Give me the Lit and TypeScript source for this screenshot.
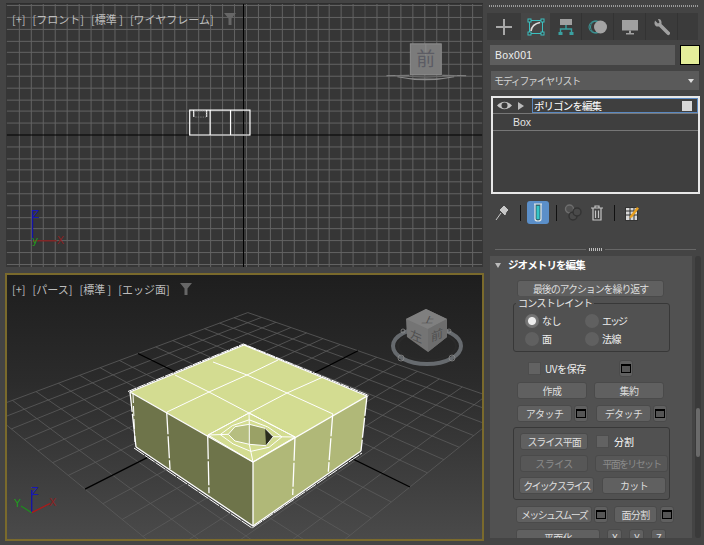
import { LitElement, html, css, svg } from "lit";
import { customElement } from "lit/decorators.js";

type P = [number, number];
const proj = (u: number, v: number): P => {
  const w = 1 - 0.1985 * u - 0.1868 * v;
  return [(81.6 * u - 177.9 * v + 247) / w, (-16.7 * u - 9.3 * v + 407) / w];
};
const pts = (a: P[]) => a.map((p) => p.join(",")).join(" ");
const mix = (a: P, b: P, t: number): P => [a[0] + (b[0] - a[0]) * t, a[1] + (b[1] - a[1]) * t];
const ln = (a: P, b: P) => svg`<line x1=${a[0]} y1=${a[1]} x2=${b[0]} y2=${b[1]}></line>`;

function frontGrid() {
  const out: unknown[] = [];
  for (let k = 0; k < 40; k++) {
    const x = Math.round(18 + k * 11.98) + 0.5;
    if (x > 484) break;
    const major = k === 9 || k === 29;
    out.push(svg`<line x1=${x} y1="4" x2=${x} y2="268" stroke=${major ? "#505050" : "#636363"} stroke-width="1"></line>`);
  }
  for (let k = -12; k < 12; k++) {
    const y = Math.round(135 + k * 11.8) + 0.5;
    if (k !== 0) out.push(svg`<line x1="6" y1=${y} x2="483" y2=${y} stroke="#636363" stroke-width="1"></line>`);
  }
  return out;
}

function perspGrid() {
  const out: unknown[] = [];
  for (let i = -7; i <= 7; i++) {
    const t = i / 7;
    if (i === 0) continue;
    out.push(ln(proj(t, -1), proj(t, 1)));
    out.push(ln(proj(-1, t), proj(1, t)));
  }
  return out;
}

function box() {
  const far: P = [244, 345], left: P = [130, 392], right: P = [367, 396], near: P = [253, 462];
  const bl: P = [136, 447], br: P = [361, 451], bn: P = [253, 526];
  const A: P = [249, 413], B: P = [295, 437], C: P = [253, 462], D: P = [208, 435];
  const hole: P[] = [[228.3, 434.3], [235, 426.7], [249.3, 424.3], [265, 428.3], [273.3, 436.7], [266, 445.7], [249.3, 444.3], [235, 441]];
  const outer: P[] = [D, mix(D, A, 0.5), A, mix(A, B, 0.5), B, mix(B, C, 0.5), C, mix(C, D, 0.5)];
  const ring1 = hole.map((p, i) => mix(p, outer[i], 0.4));
  return svg`
    <polygon points=${pts([far, right, near, left])} fill="#d3dc91"></polygon>
    <polygon points=${pts([left, near, bn, bl])} fill="#6e744a"></polygon>
    <polygon points=${pts([near, right, br, bn])} fill="#b0b878"></polygon>
    <polygon points=${pts(hole)} fill="#b6be80"></polygon>
    <polygon points=${pts([[249.3, 424.3], [265, 428.3], [266, 445.7], [249.3, 444.3]])} fill="#9aa166"></polygon>
    <polygon points=${pts([[265, 428.3], [273.3, 436.7], [266, 445.7]])} fill="#2b2d1d"></polygon>
    <g stroke="#fff" stroke-width="1" fill="none">
      <polyline points="175,375 209,392 249,413 295,437"></polyline>
      <polyline points="213,362 247,375 287,393 333,414"></polyline>
      <polyline points="278,360 247,375 209,392 167,412"></polyline>
      <polyline points="323,377 287,393 249,413 208,435"></polyline>
      <polygon points=${pts(hole)}></polygon>
      <polygon points=${pts(ring1)}></polygon>
      <polygon points=${pts(outer)}></polygon>
      ${hole.map((p, i) => (i % 2 === 0 ? ln(p, outer[i]) : null))}
      <line x1="249.3" y1="424.3" x2="249.3" y2="444.3"></line>
      <g stroke-width="1.3">
        <polyline points="130,392 244,345 367,396 253,462 130,392"></polyline>
        <polyline points="128,391.5 243.5,344 369,395.5" stroke-dasharray="9 1" stroke-width="1"></polyline>
        <line x1="253" y1="462" x2="253" y2="526"></line>
        <line x1="130" y1="392" x2="136" y2="447" stroke-dasharray="20 2"></line>
        <line x1="133" y1="393" x2="135" y2="445" stroke-dasharray="10 3" stroke-width="1"></line>
        <line x1="367" y1="396" x2="361" y2="451" stroke-dasharray="20 2"></line>
        <polyline points="136,447 253,526 361,451"></polyline>
        <polyline points="134,448 252,528 362,453" stroke-dasharray="12 1" stroke-width="1"></polyline>
        <line x1="166.7" y1="412.3" x2="170" y2="469" stroke-dasharray="22 2"></line>
        <line x1="207.7" y1="435.3" x2="209" y2="493.3" stroke-dasharray="24 2"></line>
        <line x1="295" y1="436.7" x2="292.7" y2="495" stroke-dasharray="24 2"></line>
        <line x1="332.7" y1="414.3" x2="328.3" y2="471.7" stroke-dasharray="22 2"></line>
      </g>
    </g>`;
}

const filterIcon = html`<svg class="filter" viewBox="0 0 12 12"><path d="M0 0H12L7.5 5.5V12H4.5V5.5Z" fill="#666"></path></svg>`;
const winIcon = html`<span class="ib"><i></i></span>`;

@customElement("app-root")
export class AppRoot extends LitElement {
  static styles = css`
    :host { display: block; width: 704px; height: 545px; overflow: hidden; background: #444; font-family: "Noto Sans CJK JP", "Liberation Sans", sans-serif; font-size: 10px; color: #ddd; }
    .root { display: flex; width: 704px; height: 545px; }
    .left { width: 484px; display: flex; flex-direction: column; padding: 3px 0 0 5px; box-sizing: border-box; background: #444; }
    .vp { position: relative; overflow: hidden; box-sizing: border-box; }
    .vp svg.scene { display: block; width: 100%; height: 100%; }
    .top { margin-left: 1px; width: 477px; height: 264px; background: #363636; border-top: 1px solid #2e2e2e; }
    .bottom { margin-top: 6px; width: 479px; height: 268px; border: 2px solid #7a6a2c; background: linear-gradient(#1e1e1e, #2b2b2b 40%, #4a4a4a); }
    .labels { position: absolute; left: 6px; top: 8px; display: flex; align-items: center; gap: 7px; color: #bdbdbd; font-size: 11px; line-height: 14px; white-space: nowrap; }
    .bottom .labels { left: 5px; top: 7px; }
    .filter { width: 12px; height: 12px; margin-left: 3px; }
    .right { width: 220px; background: #444; position: relative; display: flex; flex-direction: column; }
    .dotted { margin: 5px 5px 0 5px; height: 2px; background: repeating-linear-gradient(90deg, #9a9a9a 0 1px, #444 1px 2px); }
    .tabs { margin: 6px 6px 0 3px; height: 27px; display: flex; background: #3b3b3b; }
    .tab { width: 32px; display: flex; align-items: center; justify-content: center; box-sizing: border-box; border-right: 1px solid #333; }
    .tab.first { width: 34px; border: 0; }
    .tab.on { width: 29px; background: #464646; border: 0; }
    .tab svg { width: 20px; height: 20px; }
    .name { margin: 5px 4px 0 6px; height: 20px; display: flex; gap: 5px; }
    .field { flex: 1; background: #5e5e5e; color: #eee; padding-left: 5px; line-height: 20px; font-family: "Liberation Sans", sans-serif; font-size: 10.5px; letter-spacing: .3px; }
    .swatch { width: 20px; height: 20px; box-sizing: border-box; border: 1px solid #000; background: #e4ee9a; }
    .drop { margin: 6px 5px 0 7px; height: 19px; background: #5a5a5a; display: flex; justify-content: space-between; align-items: center; padding: 0 5px 0 3px; color: #d2d2d2; letter-spacing: -1.3px; font-size: 10px; }
    .drop b { width: 0; height: 0; border: 3.5px solid transparent; border-top: 4px solid #ddd; border-bottom: 0; }
    .stack { margin: 6px 4px 0 7px; height: 98px; box-sizing: border-box; border: 2px solid #e8e8e8; background: #3f3f3f; }
    .s1 { height: 15px; display: flex; align-items: center; border-bottom: 1px solid #777; }
    .s1 .eye { width: 15px; height: 11px; margin: 0 6px 0 4px; }
    .s1 .tri { width: 0; height: 0; border: 4px solid transparent; border-left: 6px solid #bbb; border-right: 0; margin-right: 8px; }
    .sel { flex: 1; height: 15px; box-sizing: border-box; border: 1px solid #5a88c0; display: flex; justify-content: space-between; align-items: center; padding: 0 5px 0 1px; color: #fff; font-size: 10.5px; letter-spacing: -.9px; line-height: 13px; }
    .sel i { width: 10px; height: 10px; background: #d8d8d8; }
    .s2 { height: 16px; border-bottom: 1px solid #777; padding-left: 20px; line-height: 17px; font-family: "Liberation Sans", sans-serif; font-size: 10.5px; color: #e2e2e2; }
    .tools { margin: 6px 0 0 11px; height: 25px; display: flex; align-items: center; }
    .tools svg { display: block; }
    .sep { width: 1px; height: 16px; background: #111; }
    .sa { margin: 0 6px 0 11px; } .sb { margin: 0 7px 0 7px; } .sc { margin: 0 10px 0 11px; }
    .trash { margin-left: 9px; }
    .active { width: 22px; height: 23px; background: #5b8fc9; border-radius: 3px; display: flex; align-items: center; justify-content: center; }
    .divider { margin: 24px 8px 0 11px; height: 1px; display: flex; align-items: center; gap: 3px; }
    .divider i { flex: 1; height: 1px; background: #666; }
    .divider u { width: 13px; height: 3px; background: repeating-linear-gradient(90deg, #bbb 0 1px, #444 1px 2px); }
    .rollwrap { margin: 6px 0 0 6px; height: 282px; display: flex; gap: 3px; }
    .roll { width: 202px; height: 282px; background: #515151; overflow: hidden; box-sizing: border-box; padding: 0 0 0 23px; }
    .bar { width: 6px; height: 282px; background: #3a3a3a; position: relative; border-radius: 3px; }
    .bar i { position: absolute; left: 1px; right: 1px; top: 152px; height: 49px; background: #6a6a6a; border-radius: 2px; }
    .title { margin-left: -23px; height: 18px; padding: 0 6px 0 5px; display: flex; align-items: center; color: #fff; font-weight: 700; font-size: 10.5px; letter-spacing: -.9px; line-height: 16px; }
    .title b { width: 0; height: 0; border: 3.5px solid transparent; border-top: 5px solid #bbb; border-bottom: 0; margin-right: 7px; }
    .title span { flex: 1; }
    .title u { width: 6px; height: 6px; background: radial-gradient(circle, #888 40%, transparent 50%) 0 0 / 2px 2px; }
    .row { display: flex; height: 17px; margin-left: 4px; gap: 7px; }
    .btn { box-sizing: border-box; height: 17px; background: #606060; border: 1px solid #4a4a4a; border-radius: 3px; color: #dedede; display: flex; align-items: center; justify-content: center; font-size: 10px; letter-spacing: -.6px; white-space: nowrap; overflow: hidden; line-height: 14px; }
    .btn.dis { color: #8a8a8a; background: #575757; }
    .t1 { letter-spacing: -1.1px; } .t2 { letter-spacing: -1.7px; }
    .w70 { width: 70px; } .w55 { width: 55px; } .w147 { width: 147px; } .w68 { width: 68px; } .w73 { width: 73px; }
    .w76 { width: 76px; } .w75 { width: 75px; } .w64 { width: 64px; } .w43 { width: 43px; } .w84 { width: 84px; } .w15 { width: 15px; }
    .ib { box-sizing: border-box; width: 14px; height: 17px; background: #606060; border: 1px solid #4a4a4a; border-radius: 3px; display: flex; align-items: center; justify-content: center; flex: none; }
    .ib i { box-sizing: border-box; width: 10px; height: 9px; border: 1px solid #000; border-top-width: 2px; background: #555; }
    .g2 { gap: 2px; } .g9 { gap: 8px; }
    .m6 { margin-top: 6px; } .m5 { margin-top: 5px; } .m8 { margin-top: 8px; }
    .group { position: relative; margin: 6px 0 0 0; width: 157px; box-sizing: border-box; border: 1px solid #383838; border-radius: 3px; }
    .legend { position: absolute; left: 2px; top: -8px; background: #515151; padding: 0 2px; line-height: 13px; letter-spacing: -.7px; color: #e8e8e8; font-size: 10px; }
    .g1 { box-sizing: border-box; height: 47px; padding: 10px 0 0 11px; display: grid; grid-template-columns: 60px 60px; grid-auto-rows: 18px; }
    .radio { display: flex; align-items: flex-start; gap: 3px; line-height: 14px; color: #eee; letter-spacing: -.5px; white-space: nowrap; }
    .radio i { width: 14px; height: 14px; border-radius: 50%; background: #606060; flex: none; }
    .radio.on i { background: radial-gradient(circle, #eee 0 3.5px, #777 4.5px, #707070 7px); }
    .radio .t2 { letter-spacing: -2px; }
    .uv { margin-left: 15px; align-items: center; gap: 0; }
    .chk { width: 13px; height: 13px; background: #626262; border: 1px solid #4d4d4d; box-sizing: border-box; flex: none; }
    .uv label { width: 74px; margin-left: 4px; letter-spacing: -.4px; color: #eee; }
    .g3 { margin-top: 5px; height: 73px; padding: 5px 0 0 5px; display: flex; flex-direction: column; gap: 5px; }
    .g3 .row { margin-left: 0; align-items: center; }
    .ml1 { margin-left: 1px !important; }
    .g3 label { margin-left: -3px; color: #fff; line-height: 17px; }
    .m7 { margin-left: 6px; }
    .face { margin: 0 1px 0 4px; }
    .last { margin-left: 3px; }
    .axis { font-family: "DejaVu Sans", sans-serif; font-size: 11px; }
  `;

  render() {
    return html`<div class="root">
      <div class="left">
        <div class="vp top">
          <svg class="scene" viewBox="6 4 477 264">
            ${frontGrid()}
            <line x1="6" y1="135.5" x2="483" y2="135.5" stroke="#000"></line>
            <line x1="243.5" y1="4" x2="243.5" y2="268" stroke="#000"></line>
            <g fill="none" stroke="#fff" stroke-width="1.2">
              <rect x="189.5" y="110.5" width="60.5" height="25"></rect>
              <line x1="210" y1="110.5" x2="210" y2="135.5"></line>
              <line x1="230.5" y1="110.5" x2="230.5" y2="135.5"></line>
              <polyline points="193.5,110.5 193.5,117.5"></polyline>
              <polyline points="206.5,110.5 206.5,117.5"></polyline>
            </g>
            <rect x="194" y="111.5" width="12" height="6" fill="none" stroke="#888" stroke-width=".8" stroke-dasharray="1.5 1"></rect>
            <rect x="411" y="44" width="31" height="31" fill="#7b7b7b"></rect>
            <rect x="411" y="44" width="31" height="31" fill="none" stroke="#8e8e8e"></rect>
            <line x1="426.5" y1="44" x2="426.5" y2="60" stroke="#8a8a8a"></line>
            <text x="426.5" y="66" text-anchor="middle" font-size="19" fill="#5c5c64" font-family="Noto Sans CJK JP">前</text>
            <path d="M387 76 L410 75.5 M443 75.5 L467 76 M398 77 Q426 83 455 77 M414 79.5 H440" stroke="#8a8a8a" stroke-width="1.2" fill="none"></path>
            <path d="M396 76 Q426 79 458 76" stroke="#6a6a6a" fill="none"></path>
            <line x1="31.7" y1="211" x2="31.7" y2="241.7" stroke="#1212a8" stroke-width="1.3"></line>
            <line x1="31.7" y1="241.7" x2="56" y2="241.7" stroke="#8a1e1e" stroke-width="1.3"></line>
            <text class="axis" x="31" y="219" fill="#1818b8">Z</text>
            <text class="axis" x="56" y="245" fill="#8a2222">X</text>
            <text class="axis" x="31" y="245" fill="#1f9a1f">y</text>
          </svg>
          <div class="labels"><span>[+]</span><span>[フロント]</span><span>[標準 ]</span><span>[ワイヤフレーム]</span>${filterIcon}</div>
        </div>
        <div class="vp bottom">
          <svg class="scene" viewBox="7 275 475 264">
            <g stroke="#5c5c5c" stroke-width=".8">${perspGrid()}</g>
            <g stroke="#000" stroke-width="1.3">${ln(proj(1, 0), proj(-1, 0))}${ln(proj(0, 1), proj(0, -1))}</g>
            ${box()}
            <ellipse cx="427" cy="346" rx="34" ry="18" fill="none" stroke="#666a6e" stroke-width="4"></ellipse>
            <ellipse cx="427" cy="346" rx="29" ry="14" fill="none" stroke="#2a2a2a" stroke-width="2"></ellipse>
            <g fill="none" stroke="#8a8a8a" stroke-width=".8"><circle cx="401" cy="358" r="3"></circle><circle cx="452" cy="358" r="3"></circle><circle cx="403" cy="331" r="2"></circle><circle cx="449" cy="331" r="2"></circle></g>
            <polygon points="426,309 447,319 447,337 428,352 407,337 406,319" fill="#747474"></polygon>
            <polygon points="426,309 447,319 428,329 406,319" fill="#7f7f7f"></polygon>
            <polygon points="428,329 447,319 447,337 428,352" fill="#6d6d6d"></polygon>
            <text font-size="12" fill="#4c4c4c" font-family="Noto Sans CJK JP" transform="translate(421,323) skewX(-25) scale(1,.7)">上</text>
            <text font-size="12" fill="#505050" font-family="Noto Sans CJK JP" transform="translate(410,338) skewY(24)">左</text>
            <text font-size="12" fill="#505050" font-family="Noto Sans CJK JP" transform="translate(431,342) skewY(-24)">前</text>
            <line x1="31.7" y1="490" x2="31.7" y2="512.7" stroke="#1212a8" stroke-width="1.3"></line>
            <line x1="31.7" y1="512.7" x2="50" y2="503.5" stroke="#b01818" stroke-width="1.3"></line>
            <line x1="31.7" y1="512.7" x2="21" y2="506" stroke="#1f8a1f" stroke-width="1.3"></line>
            <text class="axis" x="31" y="495" fill="#1818b8">Z</text>
            <text class="axis" x="49" y="506" fill="#8a2222">X</text>
            <text class="axis" x="14" y="507" fill="#1f9a1f">Y</text>
          </svg>
          <div class="labels"><span>[+]</span><span>[パース]</span><span>[標準 ]</span><span>[エッジ面]</span>${filterIcon}</div>
        </div>
      </div>
      <div class="right">
        <div class="dotted"></div>
        <div class="tabs">
          <div class="tab first"><svg viewBox="0 0 20 20"><path d="M10 2V18M2 10H18" stroke="#a8a8a8" stroke-width="2"></path></svg></div>
          <div class="tab on"><svg viewBox="0 0 20 20"><rect x="3.5" y="3.5" width="13" height="13" fill="none" stroke="#3cc0c0"></rect><g fill="#3a3a3a" stroke="#3cc0c0"><rect x="2" y="2" width="3" height="3"></rect><rect x="15" y="2" width="3" height="3"></rect><rect x="2" y="15" width="3" height="3"></rect><rect x="15" y="15" width="3" height="3"></rect></g><path d="M5 14Q6 7 14 5.5" fill="none" stroke="#ddd" stroke-width="1.6"></path></svg></div>
          <div class="tab"><svg viewBox="0 0 20 20"><rect x="4" y="2" width="12" height="6" fill="#a0a0a0"></rect><path d="M10 8V12M4.5 16V12H15.5V16" fill="none" stroke="#3aa0a0" stroke-width="1.4"></path><rect x="2.5" y="15" width="4" height="3" fill="#3aa0a0"></rect><rect x="13.5" y="15" width="4" height="3" fill="#3aa0a0"></rect></svg></div>
          <div class="tab"><svg viewBox="0 0 20 20"><g fill="none" stroke="#3a9a9a" stroke-width="1"><circle cx="7" cy="10" r="6"></circle><circle cx="8.5" cy="10" r="6"></circle></g><circle cx="12.5" cy="10" r="6.5" fill="#a4a4a4"></circle></svg></div>
          <div class="tab"><svg viewBox="0 0 20 20"><rect x="2" y="3" width="16" height="10.5" fill="#a0a0a0"></rect><rect x="9" y="13.5" width="2" height="2.5" fill="#a0a0a0"></rect><rect x="6" y="16" width="8" height="1.5" fill="#a0a0a0"></rect></svg></div>
          <div class="tab"><svg viewBox="0 0 20 20"><path d="M3 3.5 L6 6.5 L7.5 5.5 L6 2 Q9 1.5 9.5 5 L9.5 7 L18 15.5 Q18.5 17 17 18 Q15.5 18.5 14.5 17 L7 9.5 L4.5 9.5 Q1.5 8 3 3.5Z" fill="#a0a0a0"></path></svg></div>
        </div>
        <div class="name"><div class="field">Box001</div><div class="swatch"></div></div>
        <div class="drop"><span>モディファイヤリスト</span><b></b></div>
        <div class="stack">
          <div class="s1">
            <svg class="eye" viewBox="0 0 15 11"><path d="M0 5.5Q7.5 -2 15 5.5Q7.5 13 0 5.5Z" fill="#c4c4c4"></path><circle cx="7.5" cy="5.5" r="3" fill="#3a3a3a"></circle></svg>
            <span class="tri"></span>
            <div class="sel"><span>ポリゴンを編集</span><i></i></div>
          </div>
          <div class="s2">Box</div>
        </div>
        <div class="tools">
          <svg width="14" height="16" viewBox="0 0 14 16"><path d="M1 15L6 8M5 5L10 10L11 7L13 5L9 1L7 3Z" fill="#c8c8c8" stroke="#c8c8c8"></path></svg>
          <span class="sep sa"></span>
          <div class="active"><svg width="10" height="19" viewBox="0 0 10 19"><path d="M1 1H9M2 1V16Q2 18 5 18Q8 18 8 16V1" fill="#2c6a78" stroke="#e8e8e8" stroke-width="1.2"></path><rect x="3.6" y="3" width="2.8" height="13" fill="#35c6c6"></rect></svg></div>
          <span class="sep sb"></span>
          <svg width="18" height="17" viewBox="0 0 18 17" fill="none" stroke="#333" stroke-width="1.4"><circle cx="5.5" cy="5" r="4" stroke="#6e6e6e" fill="#505050"></circle><circle cx="9" cy="12" r="4" fill="#4a4a4a"></circle><circle cx="13" cy="8" r="4" fill="#4a4a4a"></circle></svg>
          <svg class="trash" width="12" height="16" viewBox="0 0 12 16" fill="none" stroke="#c4c4c4" stroke-width="1.2"><path d="M0 3H12M4 3V1H8V3M2 3V15H10V3M4.5 5.5V13M7.5 5.5V13"></path></svg>
          <span class="sep sc"></span>
          <svg width="14" height="16" viewBox="0 0 14 16"><rect x=".5" y="2.5" width="12" height="13" fill="#d8d8d8" stroke="#333"></rect><path d="M1 6H12M1 10H12M5 3V15M9 3V15" stroke="#333"></path><path d="M5 11L12 2L14 3.5L7 12.5L4.5 13Z" fill="#e8a020"></path></svg>
        </div>
        <div class="divider"><i></i><u></u><i></i></div>
        <div class="rollwrap">
          <div class="roll">
            <div class="title"><b></b><span>ジオメトリを編集</span><u></u></div>
            <div class="row m6"><div class="btn w147 t1">最後のアクションを繰り返す</div></div>
            <div class="group">
              <div class="legend">コンストレイント</div>
              <div class="g1">
                <div class="radio on"><i></i>なし</div><div class="radio"><i></i><span class="t2">エッジ</span></div>
                <div class="radio"><i></i>面</div><div class="radio"><i></i>法線</div>
              </div>
            </div>
            <div class="row uv m8"><span class="chk"></span><label>UVを保存</label>${winIcon}</div>
            <div class="row m5"><div class="btn w70">作成</div><div class="btn w70">集約</div></div>
            <div class="row m6 g2"><div class="btn w55">アタッチ</div>${winIcon}<div class="btn w55 m7">デタッチ</div>${winIcon}</div>
            <div class="group g3">
              <div class="row ml1 g9"><div class="btn w68 t1">スライス平面</div><span class="chk"></span><label>分割</label></div>
              <div class="row ml1"><div class="btn w68 dis">スライス</div><div class="btn w73 dis t2">平面をリセット</div></div>
              <div class="row g9"><div class="btn w75 t2">クイック スライス</div><div class="btn w64">カット</div></div>
            </div>
            <div class="row m6 last g2"><div class="btn w76 t2">メッシュスムーズ</div>${winIcon}<div class="btn w43 face">面分割</div>${winIcon}</div>
            <div class="row m6 last"><div class="btn w84">平面化</div><div class="btn w15">X</div><div class="btn w15">Y</div><div class="btn w15">Z</div></div>
          </div>
          <div class="bar"><i></i></div>
        </div>
      </div>
    </div>`;
  }
}
